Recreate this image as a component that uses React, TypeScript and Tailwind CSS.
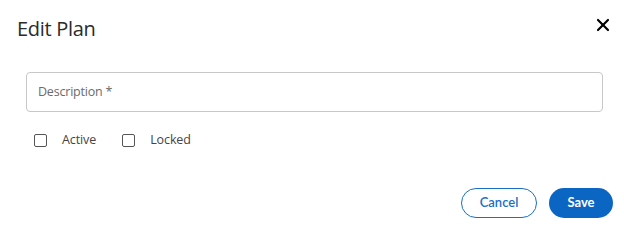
import { X } from "lucide-react";

export default function App() {
  return (
    <div className="w-[624px] h-[226px] bg-white flex flex-col" style={{ fontFamily: '"Open Sans", sans-serif' }}>
      {/* Header */}
      <div className="flex items-start justify-between pl-[17px] pr-[11px] pt-[16px]">
        <h2 className="text-[20px] leading-[26px] tracking-[-0.3px] text-[#2b2b2b]">Edit Plan</h2>
        <button className="mt-[-1px] text-black">
          <X className="w-[20px] h-[20px]" strokeWidth={2.6} />
        </button>
      </div>

      {/* Body */}
      <div className="flex flex-col pl-[26px] pr-[21px] pt-[30px]">
        <div className="h-[40px] border border-[#c7c7c7] rounded-[4px] flex items-center px-[11px]">
          <span className="text-[12.5px] tracking-[-0.2px] text-[#6b6b6b]">Description *</span>
        </div>
        <div className="flex items-center mt-[19px] pl-[8px] text-[12.5px] tracking-[-0.1px] text-[#444]">
          <label className="flex items-center">
            <span className="w-[13px] h-[13px] border-[1.5px] border-[#555] rounded-[2px]" />
            <span className="ml-[15px]">Active</span>
          </label>
          <label className="flex items-center ml-[26px]">
            <span className="w-[13px] h-[13px] border-[1.5px] border-[#555] rounded-[2px]" />
            <span className="ml-[15px]">Locked</span>
          </label>
        </div>
      </div>

      {/* Footer */}
      <div className="flex justify-end items-center gap-[12px] pr-[11px] mt-auto mb-[8px]" style={{ fontFamily: 'Lato, sans-serif' }}>
        <button className="w-[76px] h-[30px] rounded-full border border-[#1a6fc4] text-[#1a6fc4] text-[13px] font-semibold">
          Cancel
        </button>
        <button className="w-[64px] h-[30px] rounded-full bg-[#0b66c3] text-white text-[13px] font-bold">
          Save
        </button>
      </div>
    </div>
  );
}
